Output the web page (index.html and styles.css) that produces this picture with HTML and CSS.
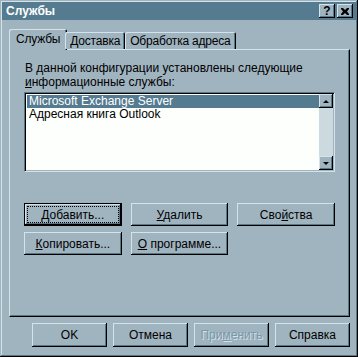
FILE: index.html
```html
<!DOCTYPE html>
<html lang="ru">
<head>
    <meta charset="UTF-8">
    <title>Службы</title>
    <link rel="stylesheet" href="styles.css">
</head>
<body>
    <div class="window">
        <div class="titlebar">
            <span class="title">Службы</span>
            <div class="title-buttons">
                <span class="tbtn">?</span>
                <span class="tbtn close">
                    <svg width="8" height="7" viewBox="0 0 8 7"><path d="M0 0h2l2 2 2-2h2v1l-2 2.5 2 2.5v1h-2l-2-2-2 2h-2v-1l2-2.5-2-2.5z" fill="#000"/></svg>
                </span>
            </div>
        </div>

        <div class="content">
            <div class="tabs">
                <span class="tab active">Службы</span>
                <span class="tab">Доставка</span>
                <span class="tab">Обработка адреса</span>
            </div>

            <div class="panel">
                <p class="intro">В данной конфигурации установлены следующие<br><u>и</u>нформационные службы:</p>

                <div class="listbox">
                    <div class="items">
                        <div class="item selected">Microsoft Exchange Server</div>
                        <div class="item">Адресная книга Outlook</div>
                    </div>
                    <div class="scrollbar">
                        <span class="sbtn"><i class="arrow up"></i></span>
                        <span class="track"></span>
                        <span class="sbtn"><i class="arrow down"></i></span>
                    </div>
                </div>

                <div class="actions">
                    <button class="btn default"><span class="focus"><u>Д</u>обавить...</span></button>
                    <button class="btn"><u>У</u>далить</button>
                    <button class="btn">Сво<u>й</u>ства</button>
                    <button class="btn"><u>К</u>опировать...</button>
                    <button class="btn"><u>О</u> программе...</button>
                </div>
            </div>

            <div class="footer">
                <button class="btn small">OK</button>
                <button class="btn small">Отмена</button>
                <button class="btn small disabled">При<u>м</u>енить</button>
                <button class="btn small">Справка</button>
            </div>
        </div>
    </div>
</body>
</html>
```

FILE: styles.css
```css
* {
    margin: 0;
    padding: 0;
    box-sizing: border-box;
}

body {
    font-family: "Liberation Sans", Arial, sans-serif;
    font-size: 12px;
    background-color: #a0b4c0;
    color: #000;
}

.window {
    width: 358px;
    height: 357px;
    padding: 2px;
    background: #a0b4c0;
    box-shadow: inset -1px -1px #000, inset 1px 1px #a0b4c0, inset -2px -2px #587888, inset 2px 2px #d4e2ea;
}

.titlebar {
    height: 18px;
    background: #557b90;
    display: flex;
    align-items: center;
    justify-content: space-between;
    padding: 0 3px 0 4px;
}

.title {
    color: #fff;
    font-weight: bold;
}

.title-buttons {
    display: flex;
    gap: 2px;
}

.tbtn {
    width: 16px;
    height: 14px;
    background: #a0b4c0;
    box-shadow: inset -1px -1px #000, inset 1px 1px #d4e2ea, inset -2px -2px #587888;
    font-weight: bold;
    line-height: 14px;
    display: flex;
    align-items: center;
    justify-content: center;
}

.content {
    padding: 9px 6px 0 7px;
}

.tabs {
    display: flex;
    align-items: flex-end;
    height: 20px;
    padding-left: 2px;
    position: relative;
    z-index: 1;
}

.tab {
    height: 17px;
    padding: 2px 5px 0 5px;
    background: #a0b4c0;
    border-radius: 2px 2px 0 0;
    box-shadow: inset 1px 1px #d4e2ea, inset -1px 0 #000, inset -2px 0 #587888;
    white-space: nowrap;
    letter-spacing: -0.2px;
}

.tab.active {
    height: 21px;
    margin-bottom: -1px;
    padding: 3px 7px 0 7px;
    margin-left: -2px;
    margin-right: -2px;
}

.panel {
    height: 268px;
    border-top: 1px solid #d4e2ea;
    border-left: 1px solid #d4e2ea;
    border-right: 1px solid #000;
    border-bottom: 1px solid #000;
    box-shadow: inset -1px -1px #587888;
    padding: 11px 14px 0 14px;
}

.intro {
    line-height: 14px;
    padding-left: 1px;
    margin-bottom: 3px;
}

.listbox {
    height: 80px;
    display: flex;
    background: #fcfffc;
    border-top: 1px solid #587888;
    border-left: 1px solid #587888;
    border-right: 1px solid #d4e2ea;
    border-bottom: 1px solid #d4e2ea;
    box-shadow: inset 1px 1px #000, inset -1px -1px #a0b4c0;
    padding: 2px;
}

.items {
    flex: 1;
}

.item {
    height: 13px;
    line-height: 13px;
    padding-left: 2px;
}

.item.selected {
    background: #557b90;
    color: #fff;
}

.scrollbar {
    width: 14px;
    display: flex;
    flex-direction: column;
    margin: -1px -1px -1px 0;
}

.sbtn {
    height: 14px;
    background: #a0b4c0;
    box-shadow: inset -1px -1px #000, inset 1px 1px #d4e2ea, inset -2px -2px #587888;
    display: flex;
    align-items: center;
    justify-content: center;
}

.track {
    flex: 1;
    background: #ccdae0;
}

.arrow {
    width: 0;
    height: 0;
    border-left: 3px solid transparent;
    border-right: 3px solid transparent;
}

.arrow.up {
    border-bottom: 3px solid #000;
}

.arrow.down {
    border-top: 3px solid #000;
}

.actions {
    display: grid;
    grid-template-columns: repeat(3, 1fr);
    column-gap: 9px;
    row-gap: 6px;
    margin-top: 31px;
}

.btn {
    height: 23px;
    font-family: inherit;
    font-size: 12px;
    color: #000;
    background: #a0b4c0;
    border: none;
    box-shadow: inset -1px -1px #000, inset 1px 1px #d4e2ea, inset -2px -2px #587888;
}

.btn.default {
    box-shadow: inset 0 0 0 1px #000, inset -2px -2px #000, inset 2px 2px #d4e2ea, inset -3px -3px #587888;
    padding: 4px;
}

.focus {
    display: flex;
    height: 100%;
    align-items: center;
    justify-content: center;
    outline: 1px dotted #000;
}

.footer {
    display: flex;
    justify-content: flex-end;
    gap: 6px;
    margin-top: 6px;
}

.btn.small {
    width: 75px;
    height: 24px;
}

.btn.disabled {
    color: #7a98a8;
    text-shadow: 1px 1px #d4e2ea;
}
```
